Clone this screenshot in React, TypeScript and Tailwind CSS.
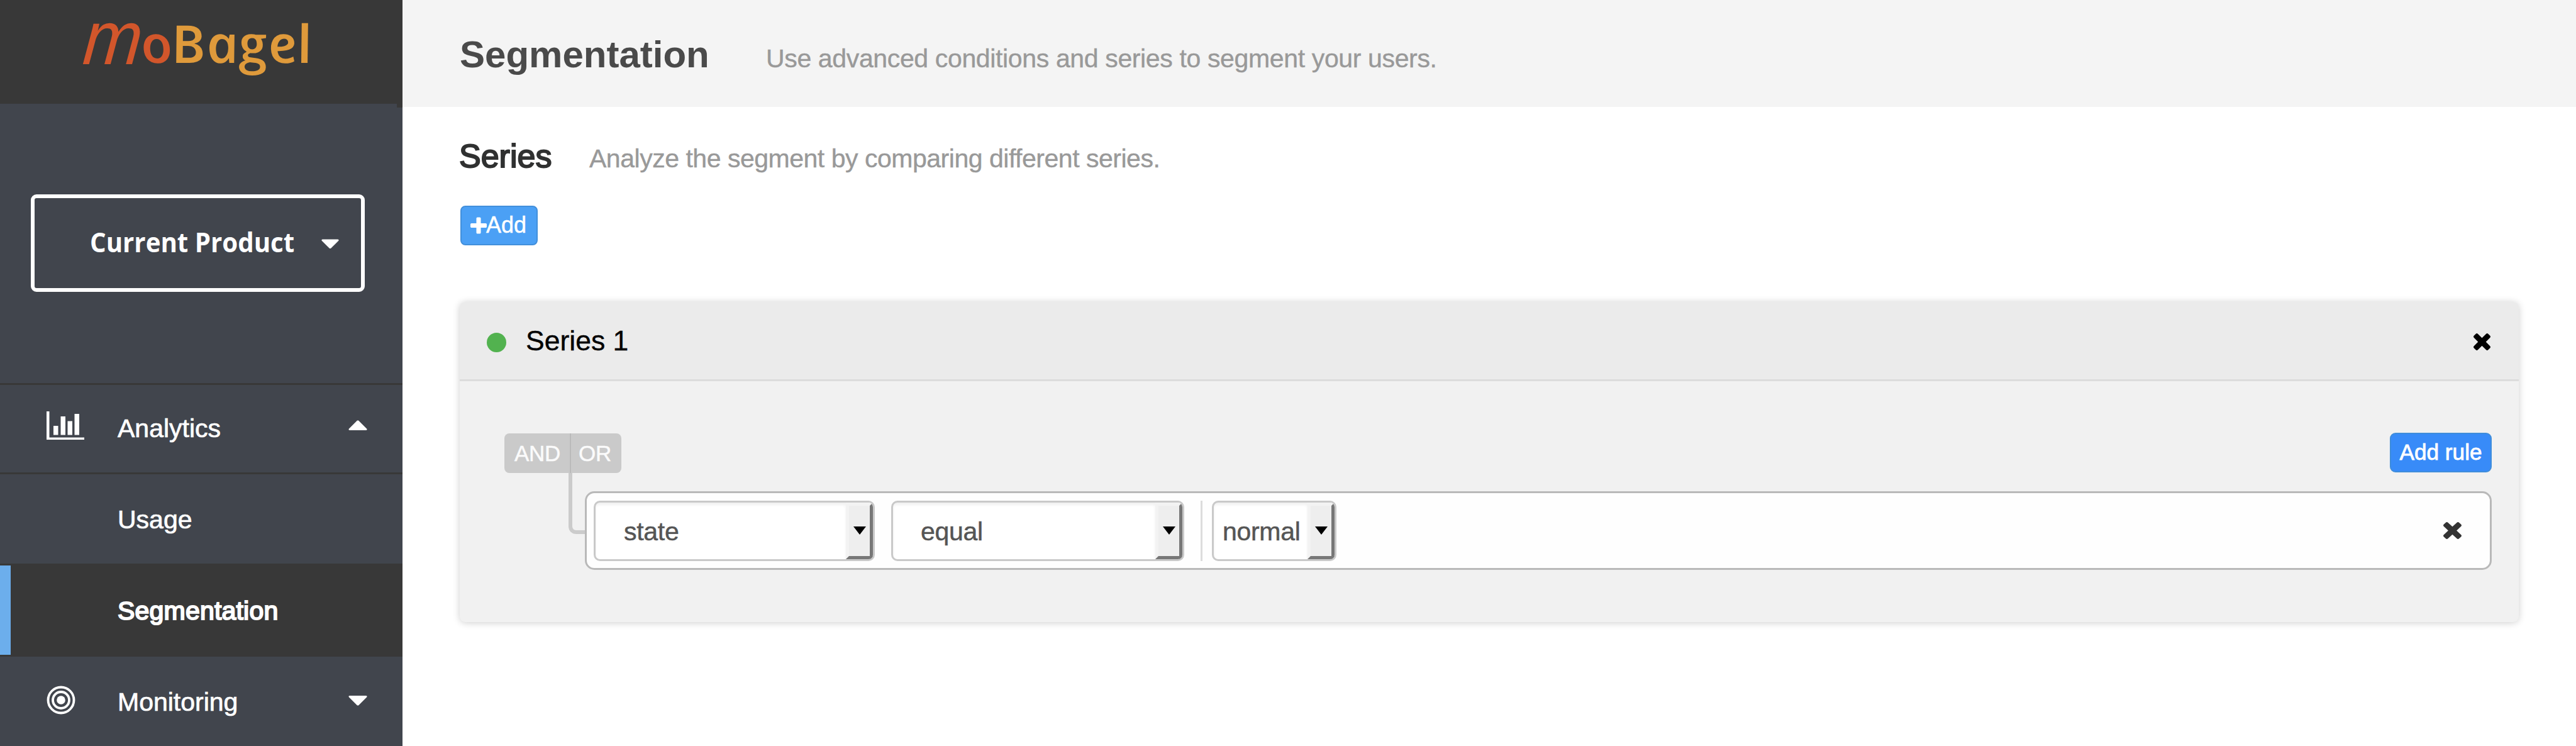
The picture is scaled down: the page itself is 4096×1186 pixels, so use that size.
import React from "react";

function Cross({ className }: { className: string }) {
  return (
    <svg viewBox="302 366 1188 1188" preserveAspectRatio="none" className={className} fill="currentColor">
      <path d="M1490 1322q0 40-28 68l-136 136q-28 28-68 28t-68-28l-294-294-294 294q-28 28-68 28t-68-28l-136-136q-28-28-28-68t28-68l294-294-294-294q-28-28-28-68t28-68l136-136q28-28 68-28t68 28l294 294 294-294q28-28 68-28t68 28l136 136q28 28 28 68t-28 68l-294 294 294 294q28 28 28 68z" />
    </svg>
  );
}

function Plus() {
  return (
    <svg viewBox="192 128 1408 1408" className="h-[27px] w-[26px]" fill="currentColor">
      <path d="M1600 736v192q0 40-28 68t-68 28h-416v416q0 40-28 68t-68 28h-192q-40 0-68-28t-28-68v-416h-416q-40 0-68-28t-28-68v-192q0-40 28-68t68-28h416v-416q0-40 28-68t68-28h192q40 0 68 28t28 68v416h416q40 0 68 28t28 68z" />
    </svg>
  );
}

function Caret({ up = false, className = "" }: { up?: boolean; className?: string }) {
  return (
    <svg viewBox="0 0 30 16" className={"h-4 w-[30px] " + className} fill="currentColor">
      {up ? <path d="M14 .5h2L29.5 14q.5 2-1.500 2h-26q-2 0-1.500-2z" /> : <path d="M14 15.500h2L29.500 2q.5-2-1.500-2h-26q-2 0-1.500 2z" />}
    </svg>
  );
}

function Logo() {
  return (
    <svg width="640" height="165" viewBox="0 0 640 165" fontFamily="'Open Sans', sans-serif" fontStyle="italic">
      <g transform="translate(130 102) skewX(-5) scale(1.4 1.52)">
        <text x="0" y="0" fontSize="80" fontWeight="400" fill="#d2562b" fontFamily="'Liberation Sans', sans-serif">m</text>
      </g>
      <g transform="translate(0 100) skewX(12) scale(1.1 1.04)">
        <text x="208" y="0" fontSize="80" fontWeight="600" fill="#d2562b">o</text>
        <text x="252 302.700 348.200 391.800 433.600" y="0" fontSize="80" fontWeight="600" fill="#df9a3b">Bagel</text>
      </g>
    </svg>
  );
}

function NavRow({ label, icon, caret, active = false, stroke = "[-webkit-text-stroke:0.7px_white]" }: {
  label: string; icon?: React.ReactNode; caret?: React.ReactNode; active?: boolean; stroke?: string;
}) {
  return (
    <div className={"flex h-[142px] w-full items-center " + (active ? "bg-[#383838]" : "")}>
      <div className={"h-full w-[17px] " + (active ? "bg-[#6caeec]" : "")} />
      <div className="flex w-[170px] pl-[57px]">{icon}</div>
      <div className={"flex-1 pt-[2px] text-[41px] leading-[46px] " + stroke}>{label}</div>
      <div className="w-[86px]">{caret}</div>
    </div>
  );
}

function Select({ value, width, pad }: { value: string; width: string; pad: string }) {
  return (
    <div className={"flex h-[96px] overflow-hidden rounded-[10px] border-[3px] border-[#c9c9c9] bg-white text-[#555] " + width}>
      <div className={"flex flex-1 items-center pt-[2px] text-[41px] leading-[46px] tracking-[-0.3px] shadow-[inset_0_4px_4px_rgba(0,0,0,0.06)] [-webkit-text-stroke:0.5px_#555] " + pad}>{value}</div>
      <div className="flex w-[43px] items-center justify-center border-[5px] border-t-[#f3f3f3] border-r-[#777] border-b-[#777] border-l-[#f3f3f3] bg-[#eee] pl-[1px]">
        <svg viewBox="0 0 20 13" className="h-[13px] w-5"><path d="M0 0h20L10 13z" fill="#000" /></svg>
      </div>
    </div>
  );
}

function Sidebar() {
  return (
    <aside className="flex h-[1186px] w-[640px] shrink-0 flex-col bg-[#41454d] text-white">
      <div className="flex h-[165px] shrink-0 bg-[#383838]"><Logo /></div>
      <div className="ml-auto h-[6px] w-[9px] shrink-0 bg-[#383838]" />
      <div className="mt-[138px] ml-[49px] flex h-[155px] w-[531px] shrink-0 items-center rounded-[9px] border-[6px] border-white pl-[88px]">
        <div className="w-[368px] pb-[4px]">
          <span className="inline-block origin-left scale-x-[0.925] font-['Open_Sans',sans-serif] text-[43.500px] leading-[50px] font-bold whitespace-nowrap">Current Product</span>
        </div>
        <Caret className="mt-[2px] !w-[28px]" />
      </div>
      <div className="mt-[145px] h-[3px] shrink-0 bg-[#383838]" />
      <div className="-mt-[3px]">
        <NavRow
          label="Analytics"
          icon={
            <svg viewBox="0 0 60 46" className="-mt-[6px] h-[46px] w-[60px]" fill="currentColor">
              <path d="M0 0h4.500v41.500H60V45H0z" /><path d="M11 23h7.500v14.500H11zM22.500 8H30v29.500h-7.500zM33.500 15.500H41v22h-7.500zM44.500 4H52v33.500h-7.500z" />
            </svg>
          }
          caret={<Caret up className="-mt-[9px]" />}
        />
      </div>
      <div className="h-[3px] shrink-0 bg-[#383838]" />
      <NavRow label="Usage" />
      <div className="h-[3px] shrink-0 bg-[#383838]" />
      <NavRow label="Segmentation" active stroke="tracking-[0.2px] [-webkit-text-stroke:2px_white]" />
      <div className="h-[3px] shrink-0 bg-[#383838]" />
      <NavRow
        label="Monitoring"
        icon={
          <svg viewBox="0 0 46 46" className="-mt-[4px] h-[46px] w-[46px]" fill="none" stroke="white" strokeWidth="3.800">
            <circle cx="23" cy="23" r="20.500" /><circle cx="23" cy="23" r="13" /><circle cx="23" cy="23" r="6.800" fill="white" stroke="none" />
          </svg>
        }
        caret={<Caret className="-mt-[2px]" />}
      />
    </aside>
  );
}

export default function App() {
  return (
    <div className="flex h-[1186px] w-[4096px] overflow-hidden bg-white font-['Liberation_Sans',Arial,sans-serif]">
      <Sidebar />
      <main className="flex-1">
        <header className="flex h-[170px] items-baseline bg-[#f4f4f4] pt-[53px] pl-[91px]">
          <h1 className="w-[487px] text-[60px] leading-[68px] font-bold text-[#4a4a4a]">Segmentation</h1>
          <p className="text-[41px] leading-[46px] tracking-[-0.36px] text-[#999] [-webkit-text-stroke:0.4px_#999]">Use advanced conditions and series to segment your users.</p>
        </header>
        <div className="flex items-baseline pt-[48px] pl-[90px]">
          <h2 className="w-[207px] text-[52px] leading-[60px] text-[#303131] [-webkit-text-stroke:2px_#303131]">Series</h2>
          <p className="text-[41px] leading-[46px] tracking-[-0.48px] text-[#999] [-webkit-text-stroke:0.4px_#999]">Analyze the segment by comparing different series.</p>
        </div>
        <button className="mt-[49px] ml-[92px] flex h-[63px] w-[123px] items-center rounded-[8px] border-[2.500px] border-[#428fdb] bg-[#4ba0f5] pl-[14px] text-[36px] leading-[40px] text-white [-webkit-text-stroke:0.5px_white]">
          <Plus /><span className="-ml-[1px] pb-[1px]">Add</span>
        </button>

        <section className="mt-[90px] ml-[91px] h-[509px] w-[3274px] overflow-visible rounded-[9px] bg-[#f1f1f1] shadow-[0_1px_12px_rgba(0,0,0,0.2)]">
          <div className="flex h-[126px] items-center rounded-t-[9px] border-b-[3px] border-[#dcdcdc] bg-[#ebebeb] pr-[45px] pl-[43px] text-black">
            <span className="mt-[6px] h-[31px] w-[31px] rounded-full bg-[#52b24f]" />
            <span className="ml-[31px] flex-1 pt-[1px] text-[44.500px] leading-[50px] [-webkit-text-stroke:0.4px_black]">Series 1</span>
            <Cross className="mt-[4px] h-[27px] w-[27px]" />
          </div>
          <div className="flex items-start justify-between pt-[82px] pr-[43px] pl-[71px]">
            <div className="mt-[1px] flex h-[63px] w-[186px] items-center overflow-hidden rounded-[8px] bg-[#cacaca] text-[35px] leading-[40px] text-[#fbfbfb] [-webkit-text-stroke:0.5px_#fbfbfb]">
              <div className="flex h-full w-[106px] items-center border-r-[2.500px] border-[#bababa] pl-[16px] tracking-[-0.3px]">AND</div>
              <div className="pl-[12px] tracking-[-0.3px]">OR</div>
            </div>
            <button className="flex h-[63px] w-[162px] items-center justify-center rounded-[9px] border-[2.500px] border-[#3f8ddb] bg-[#388bf8] pb-[1px] text-[35.200px] leading-[40px] whitespace-nowrap text-white [-webkit-text-stroke:0.800px_white]">Add rule</button>
          </div>
          <div className="flex pr-[43px] pl-[173px]">
            <div className="h-[97px] w-[26px] rounded-bl-[12px] border-b-[6px] border-l-[6px] border-[#cbcbcb]" />
            <div className="mt-[29px] flex h-[125px] flex-1 items-center rounded-[15px] border-[3px] border-[#b9b9b9] bg-[#fefefe] pr-[45px] pl-[11px]">
              <Select value="state" width="w-[447px]" pad="pl-[45px]" />
              <div className="w-[26px]" />
              <Select value="equal" width="w-[466px]" pad="pl-[44px]" />
              <div className="mr-[15px] ml-[26px] h-[96px] w-[3px] bg-[#dcdcdc]" />
              <Select value="normal" width="w-[198px]" pad="pl-[14px]" />
              <div className="flex-1" />
              <Cross className="h-[27px] w-[29px] text-[#333]" />
            </div>
          </div>
        </section>
      </main>
    </div>
  );
}
